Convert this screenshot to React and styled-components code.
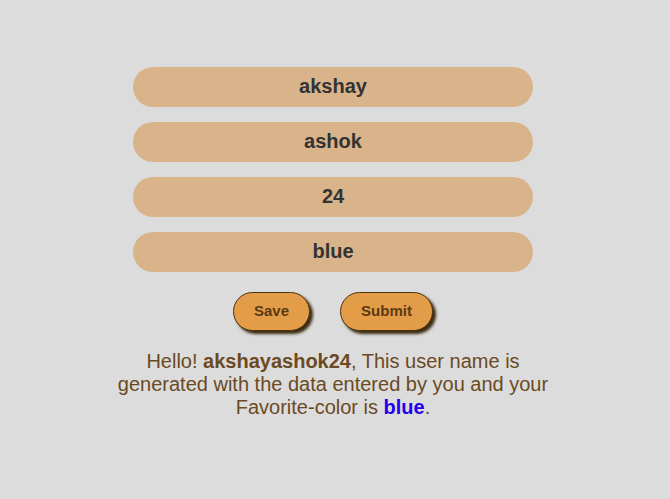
import React, { useState } from "react";
import styled, { createGlobalStyle } from "styled-components";

const GlobalStyle = createGlobalStyle`
  body {
    margin: 0;
    background: #dcdcdc;
    font-family: "Liberation Sans", Arial, sans-serif;
  }
`;

const Page = styled.div`
  display: flex;
  flex-direction: column;
  align-items: center;
  padding: 67px 4px 0 0;
`;

const Field = styled.input`
  box-sizing: border-box;
  width: 400px;
  height: 40px;
  margin-bottom: 15px;
  padding: 0 0 2px;
  border: none;
  border-radius: 20px;
  background: #d9b48a;
  color: #333;
  font-family: "Liberation Sans", Arial, sans-serif;
  font-size: 20px;
  font-weight: bold;
  text-align: center;
  outline: none;
`;

const Buttons = styled.div`
  display: flex;
  gap: 30px;
  margin-top: 5px;
`;

const Button = styled.button`
  box-sizing: border-box;
  height: 39px;
  width: ${(p) => p.$width}px;
  padding: 0 0 2px;
  border: 1px solid #4a3210;
  border-radius: 20px;
  background: #e39d48;
  color: #5a3a12;
  font-family: "Liberation Sans", Arial, sans-serif;
  font-size: 15px;
  font-weight: bold;
  box-shadow: 3px 3px 3px #3a2a10;
  cursor: pointer;
`;

const Message = styled.p`
  width: 440px;
  margin: 19px 0 0;
  text-align: center;
  font-size: 20px;
  line-height: 23px;
  color: #6b4a1f;
`;

const Name = styled.b`
  color: #6b4a1f;
`;

const Colour = styled.b`
  color: #2200ee;
`;

export default function App() {
  const [first, setFirst] = useState("akshay");
  const [last, setLast] = useState("ashok");
  const [age, setAge] = useState("24");
  const [colour, setColour] = useState("blue");

  return (
    <Page>
      <GlobalStyle />
      <Field value={first} onChange={(e) => setFirst(e.target.value)} />
      <Field value={last} onChange={(e) => setLast(e.target.value)} />
      <Field value={age} onChange={(e) => setAge(e.target.value)} />
      <Field value={colour} onChange={(e) => setColour(e.target.value)} />
      <Buttons>
        <Button $width={77}>Save</Button>
        <Button $width={93}>Submit</Button>
      </Buttons>
      <Message>
        Hello! <Name>{first + last + age}</Name>, This user name is generated
        with the data entered by you and your Favorite-color is{" "}
        <Colour>{colour}</Colour>.
      </Message>
    </Page>
  );
}
